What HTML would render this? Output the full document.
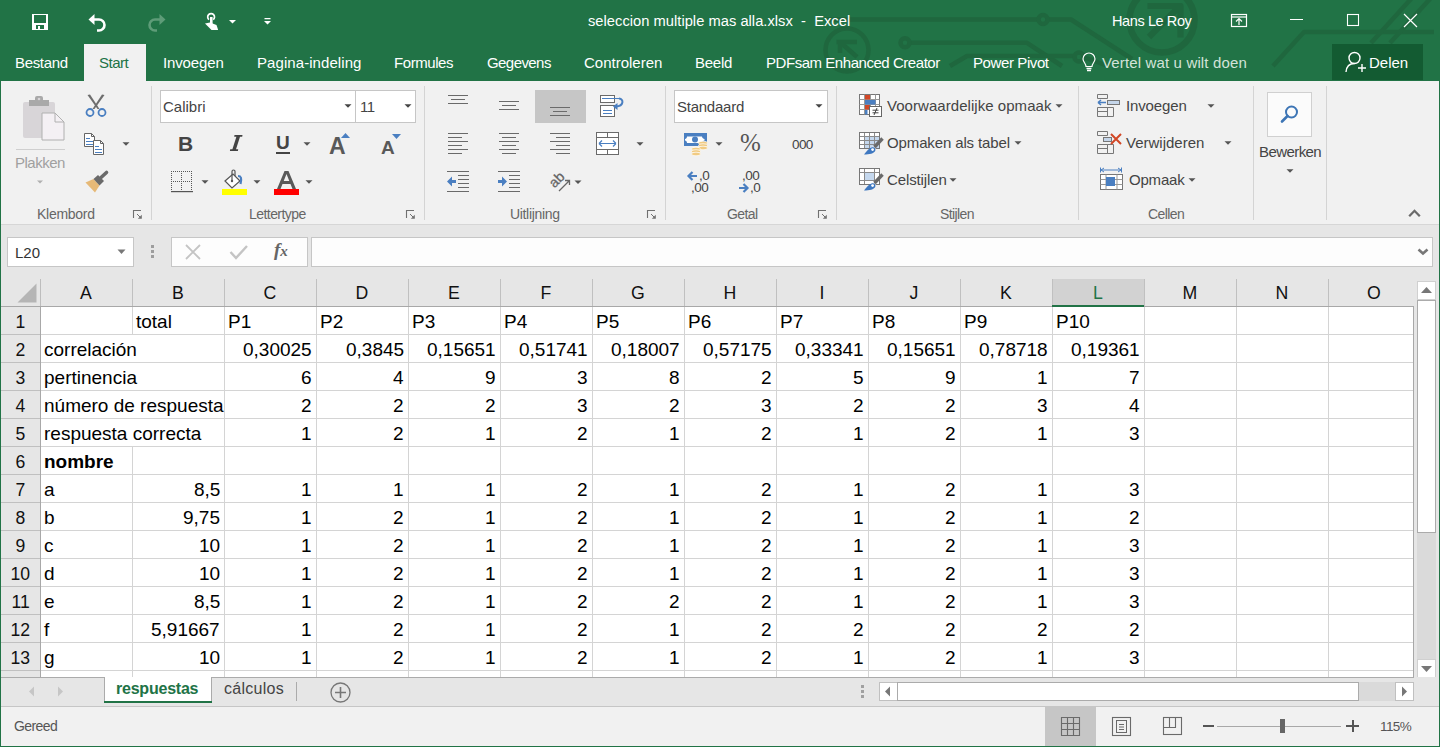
<!DOCTYPE html><html><head><meta charset="utf-8"><style>
html,body{margin:0;padding:0;width:1440px;height:747px;overflow:hidden;background:#fff;position:relative}
.a{position:absolute}
.t{position:absolute;white-space:pre;line-height:1;font-family:"Liberation Sans",sans-serif}
svg{overflow:visible}
</style></head><body>
<div class="a" style="left:0px;top:0px;width:1440px;height:81px;background:#217346;"></div>
<svg class="a" style="left:0px;top:0px" width="1440" height="81" viewBox="0 0 1440 81"><g stroke="#1f673e" stroke-width="4.5" fill="none" stroke-linejoin="round">
<path d="M825 19.5H1038.5M1047.5 19.5H1071L1132 59"/>
<circle cx="1043" cy="19.5" r="4.5"/>
<path d="M909.5 42.8H1027L1062 66"/>
<circle cx="905" cy="42.8" r="4.5"/>
<path d="M950 66L967 56H1074.5M1083.5 57L1108 66"/>
<circle cx="1079" cy="57" r="4.5"/>
<circle cx="847" cy="50" r="21.5"/>
<path d="M857 57L840 42M836.5 42H857M840 39.8V53"/>
<circle cx="1162" cy="20" r="32.5" stroke-width="6.5"/>
<path d="M1147.5 6H1180.5V37.5M1149 37L1177 9" stroke-width="6.2"/>
<path d="M1273 66L1304 32H1434"/>
<path d="M1371 43L1414.5 -5M1390 43L1433.5 -5"/>
</g></svg>
<svg class="a" style="left:32px;top:14px" width="16" height="16" viewBox="0 0 16 16"><path d="M0 0H16V16H0Z M2 1V9H14V1Z M4 11V15H12V11Z M6 12H8V15H6Z" fill="#ffffff" fill-rule="evenodd"/></svg>
<svg class="a" style="left:88px;top:13px" width="20" height="18" viewBox="0 0 20 18"><path d="M2 6.5H11A5.5 5.5 0 0 1 11 17.5H9" stroke="#fff" stroke-width="2.6" fill="none"/><path d="M0.5 6.5L6.5 1V12Z" fill="#fff"/></svg>
<svg class="a" style="left:146px;top:13px" width="20" height="18" viewBox="0 0 20 18"><path d="M18 6.5H9A5.5 5.5 0 0 0 9 17.5H11" stroke="#5e9c78" stroke-width="2.6" fill="none"/><path d="M19.5 6.5L13.5 1V12Z" fill="#5e9c78"/></svg>
<svg class="a" style="left:203px;top:12px" width="18" height="19" viewBox="0 0 18 19"><path d="M6 7.6A3.4 3.4 0 1 1 10.2 7.6" stroke="#fff" stroke-width="1.7" fill="none"/><rect x="7" y="5" width="2.6" height="8" fill="#fff"/><path d="M2 11.6L7 10.5L13.5 13L15 17.5V18H8.5Z" fill="#fff"/></svg>
<svg class="a" style="left:229px;top:20px" width="7" height="4" viewBox="0 0 7 4"><path d="M0 0H7L3.5 3.5Z" fill="#fff"/></svg>
<svg class="a" style="left:264px;top:18px" width="7" height="8" viewBox="0 0 7 8"><path d="M0.5 0H6.5V1.3H0.5Z M0 3H7L3.5 6.5Z" fill="#fff"/></svg>
<div class="t" style="left:588.00px;top:13.55px;font-size:14.7px;color:#fff;letter-spacing:0.024px;">seleccion multiple mas alla.xlsx  -  Excel</div>
<div class="t" style="left:1112.00px;top:13.72px;font-size:14.5px;color:#fff;letter-spacing:-0.400px;">Hans Le Roy</div>
<svg class="a" style="left:1230px;top:13px" width="18" height="15" viewBox="0 0 18 15"><rect x="1.5" y="1.5" width="15" height="12" stroke="#fff" stroke-width="1.2" fill="none"/><path d="M1.5 4H16.5" stroke="#fff" stroke-width="1.2"/><path d="M9 12V6M6 8.5L9 5.5L12 8.5" stroke="#fff" stroke-width="1.2" fill="none"/></svg>
<div class="a" style="left:1290px;top:19px;width:13px;height:1px;background:#fff;"></div>
<svg class="a" style="left:1346px;top:13px" width="14" height="14" viewBox="0 0 14 14"><rect x="1.5" y="1.5" width="11" height="11" stroke="#fff" stroke-width="1.1" fill="none"/></svg>
<svg class="a" style="left:1403px;top:13px" width="15" height="15" viewBox="0 0 15 15"><path d="M1 1L14 14M14 1L1 14" stroke="#fff" stroke-width="1.2"/></svg>
<div class="a" style="left:84px;top:44px;width:62px;height:37px;background:#f1f1f1;"></div>
<div class="t" style="left:15.00px;top:55.30px;font-size:15px;color:#fff;letter-spacing:-0.333px;">Bestand</div>
<div class="t" style="left:99.00px;top:55.30px;font-size:15px;color:#217346;letter-spacing:-0.500px;">Start</div>
<div class="t" style="left:163.00px;top:55.30px;font-size:15px;color:#fff;letter-spacing:-0.143px;">Invoegen</div>
<div class="t" style="left:257.00px;top:55.30px;font-size:15px;color:#fff;letter-spacing:0.071px;">Pagina-indeling</div>
<div class="t" style="left:394.00px;top:55.30px;font-size:15px;color:#fff;letter-spacing:-0.429px;">Formules</div>
<div class="t" style="left:487.00px;top:55.30px;font-size:15px;color:#fff;letter-spacing:-0.571px;">Gegevens</div>
<div class="t" style="left:584.00px;top:55.30px;font-size:15px;color:#fff;">Controleren</div>
<div class="t" style="left:695.00px;top:55.30px;font-size:15px;color:#fff;letter-spacing:-0.250px;">Beeld</div>
<div class="t" style="left:766.00px;top:55.30px;font-size:15px;color:#fff;letter-spacing:-0.455px;">PDFsam Enhanced Creator</div>
<div class="t" style="left:973.00px;top:55.30px;font-size:15px;color:#fff;letter-spacing:-0.400px;">Power Pivot</div>
<svg class="a" style="left:1082px;top:53px" width="14" height="19" viewBox="0 0 14 19"><path d="M4 13.5C4 10.5 1 9 1 6A6 6 0 0 1 13 6C13 9 10 10.5 10 13.5Z" stroke="#fff" stroke-width="1.2" fill="none"/><path d="M4.5 15.5H9.5M5 17.5H9" stroke="#fff" stroke-width="1.3"/></svg>
<div class="t" style="left:1102.00px;top:55.30px;font-size:15px;color:#d3e3d9;letter-spacing:0.143px;">Vertel wat u wilt doen</div>
<div class="a" style="left:1332px;top:44px;width:91px;height:36px;background:#135b32;"></div>
<svg class="a" style="left:1345px;top:51px" width="22" height="23" viewBox="0 0 22 23"><circle cx="9.5" cy="7" r="5.5" stroke="#fff" stroke-width="1.4" fill="none"/><path d="M1 21C1.5 15 5 12.5 9.5 12.5" stroke="#fff" stroke-width="1.4" fill="none"/><path d="M13 17H21M17 13V21" stroke="#fff" stroke-width="1.4"/></svg>
<div class="t" style="left:1369.00px;top:55.30px;font-size:15px;color:#fff;">Delen</div>
<div class="a" style="left:1px;top:81px;width:1438px;height:143px;background:#f1f1f1;"></div>
<div class="a" style="left:0px;top:224px;width:1440px;height:1px;background:#d6d6d6;"></div>
<div class="a" style="left:0px;top:225px;width:1440px;height:54px;background:#e6e6e6;"></div>
<div class="a" style="left:0px;top:81px;width:1px;height:666px;background:#217346;"></div>
<div class="a" style="left:1439px;top:81px;width:1px;height:666px;background:#217346;"></div>
<div class="a" style="left:0px;top:746px;width:1440px;height:1px;background:#217346;"></div>
<div class="a" style="left:151px;top:86px;width:1px;height:134px;background:#d4d4d4;"></div>
<div class="a" style="left:424px;top:86px;width:1px;height:134px;background:#d4d4d4;"></div>
<div class="a" style="left:665px;top:86px;width:1px;height:134px;background:#d4d4d4;"></div>
<div class="a" style="left:836px;top:86px;width:1px;height:134px;background:#d4d4d4;"></div>
<div class="a" style="left:1078px;top:86px;width:1px;height:134px;background:#d4d4d4;"></div>
<div class="a" style="left:1253px;top:86px;width:1px;height:134px;background:#d4d4d4;"></div>
<div class="a" style="left:1326px;top:86px;width:1px;height:134px;background:#d4d4d4;"></div>
<div class="t" style="left:37.00px;top:207.15px;font-size:14px;color:#666;letter-spacing:-0.286px;">Klembord</div>
<div class="t" style="left:249.00px;top:207.15px;font-size:14px;color:#666;letter-spacing:-0.556px;">Lettertype</div>
<div class="t" style="left:510.00px;top:207.15px;font-size:14px;color:#666;letter-spacing:-0.333px;">Uitlijning</div>
<div class="t" style="left:727.00px;top:207.15px;font-size:14px;color:#666;letter-spacing:-0.600px;">Getal</div>
<div class="t" style="left:940.00px;top:207.15px;font-size:14px;color:#666;letter-spacing:-0.600px;">Stijlen</div>
<div class="t" style="left:1148.00px;top:207.15px;font-size:14px;color:#666;letter-spacing:-0.600px;">Cellen</div>
<svg class="a" style="left:133px;top:210px" width="10" height="10" viewBox="0 0 10 10"><path d="M0.5 8V0.5H8" stroke="#707070" stroke-width="1.1" fill="none"/><path d="M4 4L7 7" stroke="#707070" stroke-width="1"/><path d="M4.8 8.8H8.8V4.8Z" fill="#707070"/></svg>
<svg class="a" style="left:406px;top:210px" width="10" height="10" viewBox="0 0 10 10"><path d="M0.5 8V0.5H8" stroke="#707070" stroke-width="1.1" fill="none"/><path d="M4 4L7 7" stroke="#707070" stroke-width="1"/><path d="M4.8 8.8H8.8V4.8Z" fill="#707070"/></svg>
<svg class="a" style="left:647px;top:210px" width="10" height="10" viewBox="0 0 10 10"><path d="M0.5 8V0.5H8" stroke="#707070" stroke-width="1.1" fill="none"/><path d="M4 4L7 7" stroke="#707070" stroke-width="1"/><path d="M4.8 8.8H8.8V4.8Z" fill="#707070"/></svg>
<svg class="a" style="left:818px;top:210px" width="10" height="10" viewBox="0 0 10 10"><path d="M0.5 8V0.5H8" stroke="#707070" stroke-width="1.1" fill="none"/><path d="M4 4L7 7" stroke="#707070" stroke-width="1"/><path d="M4.8 8.8H8.8V4.8Z" fill="#707070"/></svg>
<svg class="a" style="left:22px;top:96px" width="44" height="46" viewBox="0 0 44 46"><rect x="1" y="6" width="32" height="36" rx="2" fill="#d8d5d8"/>
<rect x="7" y="4" width="20" height="6" fill="#a9a9a9"/><rect x="13" y="0" width="8" height="6" rx="2" fill="#a9a9a9"/><circle cx="17" cy="3" r="1.3" fill="#d8d5d8"/>
<path d="M20 17H33L42 26V44H20Z" fill="#f4f0f4" stroke="#b0b0b0" stroke-width="1"/><path d="M33 17V26H42" fill="none" stroke="#b0b0b0" stroke-width="1"/></svg>
<div class="a" style="left:16px;top:149px;width:49px;height:1px;background:#cfcfcf;"></div>
<div class="t" style="left:15.00px;top:155.30px;font-size:15px;color:#a0a0a0;letter-spacing:-0.500px;">Plakken</div>
<svg class="a" style="left:35px;top:179px" width="10" height="6" viewBox="0 0 10 6"><path d="M2 1.5L8 1.5L5 4.5Z" fill="#b0b0b0"/></svg>
<svg class="a" style="left:85px;top:94px" width="22" height="24" viewBox="0 0 22 24"><path d="M2.5 1L5 0.5L14.5 15H12.5Z" fill="#6d6d6d"/><path d="M19.5 1L17 0.5L7.5 15H9.5Z" fill="#6d6d6d"/><circle cx="5" cy="18.5" r="3.5" stroke="#4a7fc1" stroke-width="1.8" fill="none"/><circle cx="17" cy="18.5" r="3.5" stroke="#4a7fc1" stroke-width="1.8" fill="none"/></svg>
<svg class="a" style="left:84px;top:133px" width="22" height="23" viewBox="0 0 22 23"><path d="M0.5 0.5H7.5L10.5 3.5V13.5H0.5Z" fill="#fff" stroke="#666"/><path d="M7.5 0.5V3.5H10.5" fill="none" stroke="#666"/><path d="M2 5.5H6M2 8.5H9M2 11.5H9" stroke="#4a7fc1"/><path d="M9.5 7.5H16.5L19.5 10.5V21.5H9.5Z" fill="#fff" stroke="#666"/><path d="M16.5 7.5V10.5H19.5" fill="none" stroke="#666"/><path d="M11 13.5H15M11 16.5H18M11 19.5H18" stroke="#4a7fc1"/></svg>
<svg class="a" style="left:121px;top:141px" width="10" height="6" viewBox="0 0 10 6"><path d="M1.5 1.25L8.5 1.25L5 4.75Z" fill="#555"/></svg>
<svg class="a" style="left:84px;top:171px" width="26" height="23" viewBox="0 0 26 23"><path d="M1.5 11.5L9.5 8L15.5 14.5L11 21.5Z" fill="#e6b977"/><path d="M9.5 8L14 4L20 10L15.5 14.5Z" fill="#6a6a6a"/><path d="M17 6.5L22.5 1.5" stroke="#6a6a6a" stroke-width="3.6" stroke-linecap="round"/></svg>
<div class="a" style="left:160px;top:90px;width:196px;height:33px;background:#fff;box-sizing:border-box;border:1px solid #c6c6c6;"></div>
<div class="a" style="left:355px;top:90px;width:61px;height:33px;background:#fff;box-sizing:border-box;border:1px solid #c6c6c6;"></div>
<div class="t" style="left:163.00px;top:99.30px;font-size:15px;color:#444;">Calibri</div>
<svg class="a" style="left:343px;top:103px" width="10" height="6" viewBox="0 0 10 6"><path d="M1.5 1.25L8.5 1.25L5 4.75Z" fill="#444"/></svg>
<div class="t" style="left:360.00px;top:99.30px;font-size:15px;color:#444;letter-spacing:-0.600px;">11</div>
<svg class="a" style="left:403px;top:103px" width="10" height="6" viewBox="0 0 10 6"><path d="M1.5 1.25L8.5 1.25L5 4.75Z" fill="#444"/></svg>
<div class="t" style="left:178.00px;top:133.22px;font-size:21px;color:#444;font-weight:bold;">B</div>
<svg class="a" style="left:228px;top:134px" width="15" height="18" viewBox="0 0 15 18"><path d="M6.5 1H14.5L14.2 2.8H12L8 15.2H10.2L9.9 17H1.9L2.2 15.2H4.4L8.4 2.8H6.2Z" fill="#444"/></svg>
<div class="t" style="left:276.00px;top:132.91px;font-size:19px;color:#444;font-weight:bold;">U</div>
<div class="a" style="left:276px;top:152px;width:14px;height:1.5px;background:#444;"></div>
<svg class="a" style="left:302px;top:141px" width="10" height="6" viewBox="0 0 10 6"><path d="M1.5 1.25L8.5 1.25L5 4.75Z" fill="#555"/></svg>
<div class="t" style="left:329.00px;top:134.53px;font-size:23px;color:#595959;font-weight:bold;">A</div>
<svg class="a" style="left:341px;top:133px" width="9" height="5" viewBox="0 0 9 5"><path d="M0 5H9L4.5 0Z" fill="#4a7fc1"/></svg>
<div class="t" style="left:381.00px;top:137.91px;font-size:19px;color:#595959;font-weight:bold;">A</div>
<svg class="a" style="left:392px;top:134px" width="9" height="5" viewBox="0 0 9 5"><path d="M0 0H9L4.5 5Z" fill="#4a7fc1"/></svg>
<svg class="a" style="left:170px;top:170px" width="24" height="24" viewBox="0 0 24 24"><g fill="#555"><rect x="1" y="1" width="1" height="1"/><rect x="1" y="11" width="1" height="1"/><rect x="1" y="21" width="1" height="1"/><rect x="1" y="1" width="1" height="1"/><rect x="11" y="1" width="1" height="1"/><rect x="21" y="1" width="1" height="1"/><rect x="3" y="1" width="1" height="1"/><rect x="3" y="11" width="1" height="1"/><rect x="3" y="21" width="1" height="1"/><rect x="1" y="3" width="1" height="1"/><rect x="11" y="3" width="1" height="1"/><rect x="21" y="3" width="1" height="1"/><rect x="5" y="1" width="1" height="1"/><rect x="5" y="11" width="1" height="1"/><rect x="5" y="21" width="1" height="1"/><rect x="1" y="5" width="1" height="1"/><rect x="11" y="5" width="1" height="1"/><rect x="21" y="5" width="1" height="1"/><rect x="7" y="1" width="1" height="1"/><rect x="7" y="11" width="1" height="1"/><rect x="7" y="21" width="1" height="1"/><rect x="1" y="7" width="1" height="1"/><rect x="11" y="7" width="1" height="1"/><rect x="21" y="7" width="1" height="1"/><rect x="9" y="1" width="1" height="1"/><rect x="9" y="11" width="1" height="1"/><rect x="9" y="21" width="1" height="1"/><rect x="1" y="9" width="1" height="1"/><rect x="11" y="9" width="1" height="1"/><rect x="21" y="9" width="1" height="1"/><rect x="11" y="1" width="1" height="1"/><rect x="11" y="11" width="1" height="1"/><rect x="11" y="21" width="1" height="1"/><rect x="1" y="11" width="1" height="1"/><rect x="11" y="11" width="1" height="1"/><rect x="21" y="11" width="1" height="1"/><rect x="13" y="1" width="1" height="1"/><rect x="13" y="11" width="1" height="1"/><rect x="13" y="21" width="1" height="1"/><rect x="1" y="13" width="1" height="1"/><rect x="11" y="13" width="1" height="1"/><rect x="21" y="13" width="1" height="1"/><rect x="15" y="1" width="1" height="1"/><rect x="15" y="11" width="1" height="1"/><rect x="15" y="21" width="1" height="1"/><rect x="1" y="15" width="1" height="1"/><rect x="11" y="15" width="1" height="1"/><rect x="21" y="15" width="1" height="1"/><rect x="17" y="1" width="1" height="1"/><rect x="17" y="11" width="1" height="1"/><rect x="17" y="21" width="1" height="1"/><rect x="1" y="17" width="1" height="1"/><rect x="11" y="17" width="1" height="1"/><rect x="21" y="17" width="1" height="1"/><rect x="19" y="1" width="1" height="1"/><rect x="19" y="11" width="1" height="1"/><rect x="19" y="21" width="1" height="1"/><rect x="1" y="19" width="1" height="1"/><rect x="11" y="19" width="1" height="1"/><rect x="21" y="19" width="1" height="1"/><rect x="21" y="1" width="1" height="1"/><rect x="21" y="11" width="1" height="1"/><rect x="21" y="21" width="1" height="1"/><rect x="1" y="21" width="1" height="1"/><rect x="11" y="21" width="1" height="1"/><rect x="21" y="21" width="1" height="1"/></g><rect x="1" y="21" width="22" height="1.2" fill="#555"/></svg>
<svg class="a" style="left:200px;top:179px" width="10" height="6" viewBox="0 0 10 6"><path d="M1.5 1.25L8.5 1.25L5 4.75Z" fill="#555"/></svg>
<svg class="a" style="left:221px;top:169px" width="28" height="28" viewBox="0 0 28 28"><path d="M4 12L12 5L19 12L11 19Z" fill="#fff" stroke="#555" stroke-width="1.2"/><path d="M11 12V2.5A1.5 1.5 0 0 1 14 2.5V7" stroke="#555" stroke-width="1.2" fill="none"/><circle cx="11" cy="12" r="1.2" fill="#555"/><path d="M17 7C20 7 21 9 19.5 15" stroke="#4a7fc1" stroke-width="2.2" fill="none"/><rect x="1" y="20" width="25" height="6" fill="#ffff00"/></svg>
<svg class="a" style="left:252px;top:179px" width="10" height="6" viewBox="0 0 10 6"><path d="M1.5 1.25L8.5 1.25L5 4.75Z" fill="#555"/></svg>
<svg class="a" style="left:273px;top:169px" width="28" height="28" viewBox="0 0 28 28"><path d="M4 20L11.5 2H15.5L23 20H19.5L17.5 15H9.5L7.5 20ZM10.7 12H16.3L13.5 5Z" fill="#595959"/><rect x="1" y="20" width="25" height="6" fill="#ff0000"/></svg>
<svg class="a" style="left:304px;top:179px" width="10" height="6" viewBox="0 0 10 6"><path d="M1.5 1.25L8.5 1.25L5 4.75Z" fill="#555"/></svg>
<div class="a" style="left:448px;top:95px;width:20px;height:1px;background:#6a6a6a;"></div>
<div class="a" style="left:451px;top:99px;width:14px;height:1px;background:#6a6a6a;"></div>
<div class="a" style="left:448px;top:103px;width:20px;height:1px;background:#6a6a6a;"></div>
<div class="a" style="left:499px;top:101px;width:20px;height:1px;background:#6a6a6a;"></div>
<div class="a" style="left:502px;top:105px;width:14px;height:1px;background:#6a6a6a;"></div>
<div class="a" style="left:499px;top:109px;width:20px;height:1px;background:#6a6a6a;"></div>
<div class="a" style="left:535px;top:90px;width:51px;height:33px;background:#c6c6c6;"></div>
<div class="a" style="left:550px;top:107px;width:20px;height:1px;background:#6a6a6a;"></div>
<div class="a" style="left:553px;top:111px;width:14px;height:1px;background:#6a6a6a;"></div>
<div class="a" style="left:550px;top:115px;width:20px;height:1px;background:#6a6a6a;"></div>
<div class="a" style="left:448px;top:133px;width:20px;height:1px;background:#6a6a6a;"></div>
<div class="a" style="left:499px;top:133px;width:20px;height:1px;background:#6a6a6a;"></div>
<div class="a" style="left:550px;top:133px;width:20px;height:1px;background:#6a6a6a;"></div>
<div class="a" style="left:448px;top:137px;width:14px;height:1px;background:#6a6a6a;"></div>
<div class="a" style="left:502px;top:137px;width:14px;height:1px;background:#6a6a6a;"></div>
<div class="a" style="left:556px;top:137px;width:14px;height:1px;background:#6a6a6a;"></div>
<div class="a" style="left:448px;top:141px;width:20px;height:1px;background:#6a6a6a;"></div>
<div class="a" style="left:499px;top:141px;width:20px;height:1px;background:#6a6a6a;"></div>
<div class="a" style="left:550px;top:141px;width:20px;height:1px;background:#6a6a6a;"></div>
<div class="a" style="left:448px;top:145px;width:14px;height:1px;background:#6a6a6a;"></div>
<div class="a" style="left:502px;top:145px;width:14px;height:1px;background:#6a6a6a;"></div>
<div class="a" style="left:556px;top:145px;width:14px;height:1px;background:#6a6a6a;"></div>
<div class="a" style="left:448px;top:149px;width:20px;height:1px;background:#6a6a6a;"></div>
<div class="a" style="left:499px;top:149px;width:20px;height:1px;background:#6a6a6a;"></div>
<div class="a" style="left:550px;top:149px;width:20px;height:1px;background:#6a6a6a;"></div>
<div class="a" style="left:448px;top:153px;width:14px;height:1px;background:#6a6a6a;"></div>
<div class="a" style="left:502px;top:153px;width:14px;height:1px;background:#6a6a6a;"></div>
<div class="a" style="left:556px;top:153px;width:14px;height:1px;background:#6a6a6a;"></div>
<svg class="a" style="left:599px;top:94px" width="26" height="24" viewBox="0 0 26 24"><rect x="1.5" y="1.5" width="14" height="7" fill="#fff" stroke="#6a6a6a"/><rect x="1.5" y="11.5" width="14" height="11" fill="#fff" stroke="#6a6a6a"/><path d="M3 4.5H21M4 16.5H13M4 19.5H13" stroke="#4a7fc1"/><path d="M20 4.5C25 5 25 12 17 12.5" stroke="#4a7fc1" stroke-width="2" fill="none"/><path d="M14 12.5L18.5 9V16Z" fill="#4a7fc1"/></svg>
<svg class="a" style="left:596px;top:132px" width="24" height="24" viewBox="0 0 24 24"><rect x="0.5" y="0.5" width="22" height="22" fill="#fff" stroke="#6a6a6a"/><path d="M0.5 5.5H22.5M0.5 17.5H22.5M11.5 0.5V5.5M11.5 17.5V22.5" stroke="#6a6a6a"/><path d="M3 11.5H20M3 11.5L6 8.5M3 11.5L6 14.5M20 11.5L17 8.5M20 11.5L17 14.5" stroke="#4a7fc1" stroke-width="1.2" fill="none"/></svg>
<svg class="a" style="left:635px;top:141px" width="10" height="6" viewBox="0 0 10 6"><path d="M1.5 1.25L8.5 1.25L5 4.75Z" fill="#555"/></svg>
<div class="a" style="left:447px;top:171px;width:22px;height:1px;background:#6a6a6a;"></div>
<div class="a" style="left:447px;top:191px;width:22px;height:1px;background:#6a6a6a;"></div>
<div class="a" style="left:458px;top:175px;width:11px;height:1px;background:#6a6a6a;"></div>
<div class="a" style="left:458px;top:179px;width:11px;height:1px;background:#6a6a6a;"></div>
<div class="a" style="left:458px;top:183px;width:11px;height:1px;background:#6a6a6a;"></div>
<div class="a" style="left:458px;top:187px;width:11px;height:1px;background:#6a6a6a;"></div>
<svg class="a" style="left:447px;top:176px" width="9" height="11" viewBox="0 0 9 11"><path d="M9 4H5V0.5L0 5.5L5 10.5V7H9Z" fill="#4a7fc1"/></svg>
<div class="a" style="left:498px;top:171px;width:22px;height:1px;background:#6a6a6a;"></div>
<div class="a" style="left:498px;top:191px;width:22px;height:1px;background:#6a6a6a;"></div>
<div class="a" style="left:509px;top:175px;width:11px;height:1px;background:#6a6a6a;"></div>
<div class="a" style="left:509px;top:179px;width:11px;height:1px;background:#6a6a6a;"></div>
<div class="a" style="left:509px;top:183px;width:11px;height:1px;background:#6a6a6a;"></div>
<div class="a" style="left:509px;top:187px;width:11px;height:1px;background:#6a6a6a;"></div>
<svg class="a" style="left:498px;top:176px" width="9" height="11" viewBox="0 0 9 11"><path d="M0 4H4V0.5L9 5.5L4 10.5V7H0Z" fill="#4a7fc1"/></svg>
<svg class="a" style="left:544px;top:166px" width="30" height="30" viewBox="0 0 30 30"><text x="0" y="0" font-family="Liberation Sans" font-size="14" fill="#666" stroke="#666" stroke-width="0.3" transform="translate(10.5 22.5) rotate(-45)">ab</text><path d="M15 25L25 15M21 14.5H25.5V19" stroke="#666" stroke-width="1.3" fill="none"/></svg>
<svg class="a" style="left:574px;top:180px" width="8" height="5" viewBox="0 0 8 5"><path d="M0.5 0.5H7.5L4 4Z" fill="#555"/></svg>
<div class="a" style="left:674px;top:90px;width:154px;height:33px;background:#fff;box-sizing:border-box;border:1px solid #c6c6c6;"></div>
<div class="t" style="left:677.00px;top:99.30px;font-size:15px;color:#444;letter-spacing:-0.250px;">Standaard</div>
<svg class="a" style="left:814px;top:103px" width="10" height="6" viewBox="0 0 10 6"><path d="M1.5 1.25L8.5 1.25L5 4.75Z" fill="#444"/></svg>
<svg class="a" style="left:683px;top:132px" width="26" height="25" viewBox="0 0 26 25"><rect x="1" y="1" width="23" height="13" fill="#4a7fc1"/><path d="M4 4.5H19C19 6 20.5 7 21.5 7V8.5C20.5 8.5 19 9.5 19 11H4C4 9.5 3 8.5 2 8.5V7C3 7 4 6 4 4.5Z" fill="#fff"/><circle cx="12" cy="7.5" r="3" fill="#4a7fc1"/><g fill="#f1cb83" stroke="#fff" stroke-width="0.7"><ellipse cx="20" cy="11" rx="4.5" ry="1.8"/><ellipse cx="20" cy="13.5" rx="4.5" ry="1.8"/><ellipse cx="20" cy="16" rx="4.5" ry="1.8"/><ellipse cx="13" cy="17" rx="4.5" ry="1.8"/><ellipse cx="13" cy="19.5" rx="4.5" ry="1.8"/><ellipse cx="13" cy="22" rx="4.5" ry="1.8"/></g></svg>
<svg class="a" style="left:714px;top:141px" width="10" height="6" viewBox="0 0 10 6"><path d="M1.5 1.25L8.5 1.25L5 4.75Z" fill="#555"/></svg>
<div class="t" style="left:740px;top:130px;font-size:25px;color:#555;font-family:'Liberation Serif',serif">%</div>
<div class="t" style="left:792.00px;top:137.57px;font-size:13.5px;color:#444;letter-spacing:-0.600px;">000</div>
<svg class="a" style="left:687px;top:171px" width="11" height="10" viewBox="0 0 11 10"><path d="M10 5H3M5.5 1L1.5 5L5.5 9" stroke="#4a7fc1" stroke-width="2.2" fill="none"/></svg>
<div class="t" style="left:699.00px;top:168.57px;font-size:13.5px;color:#444;letter-spacing:-0.600px;">,0</div>
<div class="t" style="left:691.00px;top:180.57px;font-size:13.5px;color:#444;letter-spacing:-0.500px;">,00</div>
<div class="t" style="left:742.00px;top:168.57px;font-size:13.5px;color:#444;letter-spacing:-0.500px;">,00</div>
<svg class="a" style="left:738px;top:183px" width="11" height="10" viewBox="0 0 11 10"><path d="M1 5H8M5.5 1L9.5 5L5.5 9" stroke="#4a7fc1" stroke-width="2.2" fill="none"/></svg>
<div class="t" style="left:750.00px;top:180.57px;font-size:13.5px;color:#444;letter-spacing:-0.600px;">,0</div>
<svg class="a" style="left:858px;top:93px" width="26" height="26" viewBox="0 0 26 26"><rect x="1.5" y="1.5" width="20" height="20" fill="#fff" stroke="#777"/><path d="M6.5 1.5V21.5M12.5 1.5V21.5M17.5 1.5V21.5M1.5 6.5H21.5M1.5 11.5H21.5M1.5 16.5H21.5" stroke="#999"/><rect x="7" y="2" width="5" height="4.5" fill="#d24726"/><rect x="7" y="7" width="10.5" height="4.5" fill="#4a7fc1"/><rect x="7" y="12" width="5" height="4.5" fill="#d24726"/><rect x="7" y="17" width="2.5" height="4.5" fill="#4a7fc1"/><rect x="11.5" y="13.5" width="12" height="10" fill="#fff" stroke="#666"/><path d="M14.5 17.2H20.5M14.5 19.8H20.5M19 15L16 22" stroke="#333" stroke-width="0.9"/></svg>
<div class="t" style="left:887.00px;top:98.30px;font-size:15px;color:#444;letter-spacing:0.048px;">Voorwaardelijke opmaak</div>
<svg class="a" style="left:1054px;top:103px" width="10" height="6" viewBox="0 0 10 6"><path d="M1.5 1.25L8.5 1.25L5 4.75Z" fill="#555"/></svg>
<svg class="a" style="left:858px;top:131px" width="26" height="25" viewBox="0 0 26 25"><rect x="1.5" y="1.5" width="20" height="16" fill="#fff" stroke="#777"/><rect x="6.5" y="5.5" width="15" height="12" fill="#c5d8ee"/><path d="M6.5 1.5V17.5M11.5 1.5V17.5M16.5 1.5V17.5M1.5 5.5H21.5M1.5 9.5H21.5M1.5 13.5H21.5" stroke="#8a8a8a"/><rect x="1.5" y="1.5" width="20" height="16" fill="none" stroke="#777"/><path d="M16.5 16L24.5 7.5" stroke="#6a6a6a" stroke-width="3.4"/><path d="M15 15.5L18 18.5" stroke="#f1f1f1" stroke-width="1"/><path d="M6 23.5C8.5 20.5 10.5 17.5 13.5 16.5C16 15.8 18.2 17.6 17.2 20C16 22.5 11.5 23.5 6 23.5Z" fill="#3f78c0"/><circle cx="14.6" cy="18.6" r="1.4" fill="#fff"/></svg>
<div class="t" style="left:887.00px;top:135.30px;font-size:15px;color:#444;letter-spacing:-0.125px;">Opmaken als tabel</div>
<svg class="a" style="left:1013px;top:140px" width="10" height="6" viewBox="0 0 10 6"><path d="M1.5 1.25L8.5 1.25L5 4.75Z" fill="#555"/></svg>
<svg class="a" style="left:858px;top:167px" width="26" height="25" viewBox="0 0 26 25"><rect x="1.5" y="1.5" width="20" height="16" fill="#fff" stroke="#777"/><rect x="6.5" y="5.5" width="10" height="8" fill="#c5d8ee"/><path d="M6.5 1.5V17.5M16.5 1.5V17.5M1.5 5.5H21.5M1.5 13.5H21.5" stroke="#8a8a8a"/><rect x="1.5" y="1.5" width="20" height="16" fill="none" stroke="#777"/><path d="M16.5 16L24.5 7.5" stroke="#6a6a6a" stroke-width="3.4"/><path d="M15 15.5L18 18.5" stroke="#f1f1f1" stroke-width="1"/><path d="M6 23.5C8.5 20.5 10.5 17.5 13.5 16.5C16 15.8 18.2 17.6 17.2 20C16 22.5 11.5 23.5 6 23.5Z" fill="#3f78c0"/><circle cx="14.6" cy="18.6" r="1.4" fill="#fff"/></svg>
<div class="t" style="left:887.00px;top:172.30px;font-size:15px;color:#444;letter-spacing:-0.111px;">Celstijlen</div>
<svg class="a" style="left:948px;top:177px" width="10" height="6" viewBox="0 0 10 6"><path d="M1.5 1.25L8.5 1.25L5 4.75Z" fill="#555"/></svg>
<svg class="a" style="left:1097px;top:94px" width="24" height="23" viewBox="0 0 24 23"><path d="M0.5 0.5H10.5V4.5H0.5ZM0.5 13.5H10.5V17.5H0.5ZM0.5 17.5H10.5V22.5H0.5ZM10.5 13.5H16.5V22.5H10.5Z" fill="none" stroke="#777"/><rect x="10.5" y="6.5" width="12" height="4" fill="#c5d6ea" stroke="#777"/><path d="M1 8.5H9M1 8.5L4 6M1 8.5L4 11" stroke="#4a7fc1" stroke-width="1.5" fill="none"/></svg>
<div class="t" style="left:1126.00px;top:98.30px;font-size:15px;color:#444;letter-spacing:-0.143px;">Invoegen</div>
<svg class="a" style="left:1206px;top:103px" width="10" height="6" viewBox="0 0 10 6"><path d="M1.5 1.25L8.5 1.25L5 4.75Z" fill="#555"/></svg>
<svg class="a" style="left:1097px;top:131px" width="26" height="23" viewBox="0 0 26 23"><path d="M0.5 0.5H10.5V4.5H0.5ZM0.5 13.5H10.5V17.5H0.5ZM0.5 17.5H10.5V22.5H0.5ZM10.5 13.5H16.5V22.5H10.5Z" fill="none" stroke="#777"/><rect x="6.5" y="6.5" width="8" height="4" fill="#c5d6ea" stroke="#777"/><path d="M14 3L24 13M24 3L14 13" stroke="#d24726" stroke-width="2"/></svg>
<div class="t" style="left:1126.00px;top:135.30px;font-size:15px;color:#444;">Verwijderen</div>
<svg class="a" style="left:1223px;top:140px" width="10" height="6" viewBox="0 0 10 6"><path d="M1.5 1.25L8.5 1.25L5 4.75Z" fill="#555"/></svg>
<svg class="a" style="left:1100px;top:167px" width="25" height="25" viewBox="0 0 25 25"><path d="M1 3H21M1 3L4 1M1 3L4 5M21 3L18 1M21 3L18 5M0.5 0.5V5.5M21.5 0.5V5.5" stroke="#4a7fc1" stroke-width="1" fill="none"/><rect x="0.5" y="7.5" width="22" height="15" fill="#fff" stroke="#777"/><path d="M0.5 12.5H22.5M0.5 17.5H22.5M6 7.5V22.5M17 7.5V22.5" stroke="#999"/><rect x="6" y="10" width="9" height="9" fill="#4a7fc1"/></svg>
<div class="t" style="left:1129.00px;top:172.30px;font-size:15px;color:#444;letter-spacing:-0.200px;">Opmaak</div>
<svg class="a" style="left:1187px;top:177px" width="10" height="6" viewBox="0 0 10 6"><path d="M1.5 1.25L8.5 1.25L5 4.75Z" fill="#555"/></svg>
<div class="a" style="left:1267px;top:92px;width:45px;height:45px;background:#fbfbfb;box-sizing:border-box;border:1px solid #d0d0d0;"></div>
<svg class="a" style="left:1280px;top:104px" width="20" height="20" viewBox="0 0 20 20"><circle cx="11.5" cy="8" r="5.5" stroke="#3d75b5" stroke-width="2" fill="none"/><path d="M7.5 12L2 17.5" stroke="#3d75b5" stroke-width="2.6" stroke-linecap="round"/></svg>
<div class="t" style="left:1259.00px;top:144.30px;font-size:15px;color:#444;letter-spacing:-0.571px;">Bewerken</div>
<svg class="a" style="left:1285px;top:168px" width="10" height="6" viewBox="0 0 10 6"><path d="M1.5 1.25L8.5 1.25L5 4.75Z" fill="#555"/></svg>
<svg class="a" style="left:1408px;top:209px" width="13" height="9" viewBox="0 0 13 9"><path d="M1.2 7.2L6.5 1.8L11.8 7.2" stroke="#6a6a6a" stroke-width="2.3" fill="none"/></svg>
<div class="a" style="left:7px;top:237px;width:127px;height:30px;background:#fff;box-sizing:border-box;border:1px solid #c6c6c6;"></div>
<div class="t" style="left:15.00px;top:245.30px;font-size:15px;color:#333;">L20</div>
<svg class="a" style="left:117px;top:249px" width="10" height="6" viewBox="0 0 10 6"><path d="M0.5 0.5H8.5L4.5 5Z" fill="#777"/></svg>
<div class="a" style="left:151px;top:245px;width:3px;height:3px;background:#9d9d9d;"></div>
<div class="a" style="left:151px;top:250px;width:3px;height:3px;background:#9d9d9d;"></div>
<div class="a" style="left:151px;top:255px;width:3px;height:3px;background:#9d9d9d;"></div>
<div class="a" style="left:171px;top:237px;width:137px;height:30px;background:#fdfdfd;box-sizing:border-box;border:1px solid #c6c6c6;"></div>
<svg class="a" style="left:184px;top:243px" width="18" height="18" viewBox="0 0 18 18"><path d="M2 2L16 16M16 2L2 16" stroke="#c4c4c4" stroke-width="1.8"/></svg>
<svg class="a" style="left:229px;top:244px" width="20" height="16" viewBox="0 0 20 16"><path d="M1.5 8L7 14L18 2" stroke="#c4c4c4" stroke-width="2.4" fill="none"/></svg>
<div class="t" style="left:274px;top:240px;font-size:19px;color:#666;font-family:'Liberation Serif',serif;font-style:italic;font-weight:bold">f<span style="font-size:15px">x</span></div>
<div class="a" style="left:311px;top:237px;width:1122px;height:30px;background:#fdfdfd;box-sizing:border-box;border:1px solid #c6c6c6;"></div>
<svg class="a" style="left:1417px;top:248px" width="12" height="8" viewBox="0 0 12 8"><path d="M1.5 1.5L6 5.5L10.5 1.5" stroke="#777" stroke-width="2.6" fill="none"/></svg>
<div class="a" style="left:1px;top:279px;width:1413px;height:27px;background:#e6e6e6;"></div>
<div class="a" style="left:1px;top:307px;width:40px;height:370px;background:#e6e6e6;"></div>
<div class="a" style="left:41px;top:307px;width:1372px;height:370px;background:#fff;"></div>
<svg class="a" style="left:17px;top:283px" width="20" height="20" viewBox="0 0 20 20"><path d="M19.5 0.5V19.5H0.5Z" fill="#b5b5b5"/></svg>
<div class="a" style="left:1052px;top:279px;width:92px;height:27px;background:#d2d2d2;"></div>
<div class="a" style="left:132px;top:279px;width:1px;height:27px;background:#c0c0c0;"></div>
<div class="t" style="left:80.00px;top:285.01px;font-size:17.7px;color:#111;">A</div>
<div class="a" style="left:224px;top:279px;width:1px;height:27px;background:#c0c0c0;"></div>
<div class="t" style="left:172.00px;top:285.01px;font-size:17.7px;color:#111;">B</div>
<div class="a" style="left:316px;top:279px;width:1px;height:27px;background:#c0c0c0;"></div>
<div class="t" style="left:263.50px;top:285.01px;font-size:17.7px;color:#111;">C</div>
<div class="a" style="left:408px;top:279px;width:1px;height:27px;background:#c0c0c0;"></div>
<div class="t" style="left:355.50px;top:285.01px;font-size:17.7px;color:#111;">D</div>
<div class="a" style="left:500px;top:279px;width:1px;height:27px;background:#c0c0c0;"></div>
<div class="t" style="left:448.00px;top:285.01px;font-size:17.7px;color:#111;">E</div>
<div class="a" style="left:592px;top:279px;width:1px;height:27px;background:#c0c0c0;"></div>
<div class="t" style="left:540.50px;top:285.01px;font-size:17.7px;color:#111;">F</div>
<div class="a" style="left:684px;top:279px;width:1px;height:27px;background:#c0c0c0;"></div>
<div class="t" style="left:631.00px;top:285.01px;font-size:17.7px;color:#111;">G</div>
<div class="a" style="left:776px;top:279px;width:1px;height:27px;background:#c0c0c0;"></div>
<div class="t" style="left:723.50px;top:285.01px;font-size:17.7px;color:#111;">H</div>
<div class="a" style="left:868px;top:279px;width:1px;height:27px;background:#c0c0c0;"></div>
<div class="t" style="left:819.50px;top:285.01px;font-size:17.7px;color:#111;">I</div>
<div class="a" style="left:960px;top:279px;width:1px;height:27px;background:#c0c0c0;"></div>
<div class="t" style="left:909.50px;top:285.01px;font-size:17.7px;color:#111;">J</div>
<div class="a" style="left:1052px;top:279px;width:1px;height:27px;background:#c0c0c0;"></div>
<div class="t" style="left:1000.00px;top:285.01px;font-size:17.7px;color:#111;">K</div>
<div class="a" style="left:1144px;top:279px;width:1px;height:27px;background:#c0c0c0;"></div>
<div class="t" style="left:1093.00px;top:285.01px;font-size:17.7px;color:#217346;">L</div>
<div class="a" style="left:1236px;top:279px;width:1px;height:27px;background:#c0c0c0;"></div>
<div class="t" style="left:1182.50px;top:285.01px;font-size:17.7px;color:#111;">M</div>
<div class="a" style="left:1328px;top:279px;width:1px;height:27px;background:#c0c0c0;"></div>
<div class="t" style="left:1275.50px;top:285.01px;font-size:17.7px;color:#111;">N</div>
<div class="t" style="left:1367.00px;top:285.01px;font-size:17.7px;color:#111;">O</div>
<div class="a" style="left:40px;top:279px;width:1px;height:28px;background:#bdbdbd;"></div>
<div class="a" style="left:1px;top:306px;width:1413px;height:1px;background:#a8a8a8;"></div>
<div class="a" style="left:1052px;top:305px;width:92px;height:2px;background:#217346;"></div>
<div class="a" style="left:1px;top:334px;width:40px;height:1px;background:#c0c0c0;"></div>
<div class="a" style="left:41px;top:334px;width:1372px;height:1px;background:#d4d4d4;"></div>
<div class="t" style="left:15.50px;top:314.10px;font-size:17.6px;color:#111;">1</div>
<div class="a" style="left:1px;top:362px;width:40px;height:1px;background:#c0c0c0;"></div>
<div class="a" style="left:41px;top:362px;width:1372px;height:1px;background:#d4d4d4;"></div>
<div class="t" style="left:15.50px;top:342.10px;font-size:17.6px;color:#111;">2</div>
<div class="a" style="left:1px;top:390px;width:40px;height:1px;background:#c0c0c0;"></div>
<div class="a" style="left:41px;top:390px;width:1372px;height:1px;background:#d4d4d4;"></div>
<div class="t" style="left:15.50px;top:370.10px;font-size:17.6px;color:#111;">3</div>
<div class="a" style="left:1px;top:418px;width:40px;height:1px;background:#c0c0c0;"></div>
<div class="a" style="left:41px;top:418px;width:1372px;height:1px;background:#d4d4d4;"></div>
<div class="t" style="left:15.50px;top:398.10px;font-size:17.6px;color:#111;">4</div>
<div class="a" style="left:1px;top:446px;width:40px;height:1px;background:#c0c0c0;"></div>
<div class="a" style="left:41px;top:446px;width:1372px;height:1px;background:#d4d4d4;"></div>
<div class="t" style="left:15.50px;top:426.10px;font-size:17.6px;color:#111;">5</div>
<div class="a" style="left:1px;top:474px;width:40px;height:1px;background:#c0c0c0;"></div>
<div class="a" style="left:41px;top:474px;width:1372px;height:1px;background:#d4d4d4;"></div>
<div class="t" style="left:15.50px;top:454.10px;font-size:17.6px;color:#111;">6</div>
<div class="a" style="left:1px;top:502px;width:40px;height:1px;background:#c0c0c0;"></div>
<div class="a" style="left:41px;top:502px;width:1372px;height:1px;background:#d4d4d4;"></div>
<div class="t" style="left:15.50px;top:482.10px;font-size:17.6px;color:#111;">7</div>
<div class="a" style="left:1px;top:530px;width:40px;height:1px;background:#c0c0c0;"></div>
<div class="a" style="left:41px;top:530px;width:1372px;height:1px;background:#d4d4d4;"></div>
<div class="t" style="left:15.50px;top:510.10px;font-size:17.6px;color:#111;">8</div>
<div class="a" style="left:1px;top:558px;width:40px;height:1px;background:#c0c0c0;"></div>
<div class="a" style="left:41px;top:558px;width:1372px;height:1px;background:#d4d4d4;"></div>
<div class="t" style="left:15.50px;top:538.10px;font-size:17.6px;color:#111;">9</div>
<div class="a" style="left:1px;top:586px;width:40px;height:1px;background:#c0c0c0;"></div>
<div class="a" style="left:41px;top:586px;width:1372px;height:1px;background:#d4d4d4;"></div>
<div class="t" style="left:10.50px;top:566.10px;font-size:17.6px;color:#111;">10</div>
<div class="a" style="left:1px;top:614px;width:40px;height:1px;background:#c0c0c0;"></div>
<div class="a" style="left:41px;top:614px;width:1372px;height:1px;background:#d4d4d4;"></div>
<div class="t" style="left:11.50px;top:594.10px;font-size:17.6px;color:#111;">11</div>
<div class="a" style="left:1px;top:642px;width:40px;height:1px;background:#c0c0c0;"></div>
<div class="a" style="left:41px;top:642px;width:1372px;height:1px;background:#d4d4d4;"></div>
<div class="t" style="left:10.50px;top:622.10px;font-size:17.6px;color:#111;">12</div>
<div class="a" style="left:1px;top:670px;width:40px;height:1px;background:#c0c0c0;"></div>
<div class="a" style="left:41px;top:670px;width:1372px;height:1px;background:#d4d4d4;"></div>
<div class="t" style="left:10.50px;top:650.10px;font-size:17.6px;color:#111;">13</div>
<div class="t" style="left:10.50px;top:678.10px;font-size:17.6px;color:#111;">14</div>
<div class="a" style="left:40px;top:307px;width:1px;height:370px;background:#a8a8a8;"></div>
<div class="a" style="left:132px;top:307px;width:1px;height:28px;background:#d4d4d4;"></div>
<div class="a" style="left:132px;top:447px;width:1px;height:230px;background:#d4d4d4;"></div>
<div class="a" style="left:224px;top:307px;width:1px;height:370px;background:#d4d4d4;"></div>
<div class="a" style="left:316px;top:307px;width:1px;height:370px;background:#d4d4d4;"></div>
<div class="a" style="left:408px;top:307px;width:1px;height:370px;background:#d4d4d4;"></div>
<div class="a" style="left:500px;top:307px;width:1px;height:370px;background:#d4d4d4;"></div>
<div class="a" style="left:592px;top:307px;width:1px;height:370px;background:#d4d4d4;"></div>
<div class="a" style="left:684px;top:307px;width:1px;height:370px;background:#d4d4d4;"></div>
<div class="a" style="left:776px;top:307px;width:1px;height:370px;background:#d4d4d4;"></div>
<div class="a" style="left:868px;top:307px;width:1px;height:370px;background:#d4d4d4;"></div>
<div class="a" style="left:960px;top:307px;width:1px;height:370px;background:#d4d4d4;"></div>
<div class="a" style="left:1052px;top:307px;width:1px;height:370px;background:#d4d4d4;"></div>
<div class="a" style="left:1144px;top:307px;width:1px;height:370px;background:#d4d4d4;"></div>
<div class="a" style="left:1236px;top:307px;width:1px;height:370px;background:#d4d4d4;"></div>
<div class="a" style="left:1328px;top:307px;width:1px;height:370px;background:#d4d4d4;"></div>
<div class="a" style="left:1413px;top:306px;width:1px;height:371px;background:#a8a8a8;"></div>
<div class="t" style="left:136.00px;top:311.91px;font-size:19px;color:#000;">total</div>
<div class="t" style="left:228.00px;top:311.91px;font-size:19px;color:#000;">P1</div>
<div class="t" style="left:320.00px;top:311.91px;font-size:19px;color:#000;">P2</div>
<div class="t" style="left:412.00px;top:311.91px;font-size:19px;color:#000;">P3</div>
<div class="t" style="left:504.00px;top:311.91px;font-size:19px;color:#000;">P4</div>
<div class="t" style="left:596.00px;top:311.91px;font-size:19px;color:#000;">P5</div>
<div class="t" style="left:688.00px;top:311.91px;font-size:19px;color:#000;">P6</div>
<div class="t" style="left:780.00px;top:311.91px;font-size:19px;color:#000;">P7</div>
<div class="t" style="left:872.00px;top:311.91px;font-size:19px;color:#000;">P8</div>
<div class="t" style="left:964.00px;top:311.91px;font-size:19px;color:#000;">P9</div>
<div class="t" style="left:1056.00px;top:311.91px;font-size:19px;color:#000;">P10</div>
<div class="t" style="left:44.00px;top:339.91px;font-size:19px;color:#000;">correlación</div>
<div class="t" style="left:243.00px;top:339.91px;font-size:19px;color:#000;">0,30025</div>
<div class="t" style="left:346.00px;top:339.91px;font-size:19px;color:#000;">0,3845</div>
<div class="t" style="left:427.00px;top:339.91px;font-size:19px;color:#000;">0,15651</div>
<div class="t" style="left:519.00px;top:339.91px;font-size:19px;color:#000;">0,51741</div>
<div class="t" style="left:611.00px;top:339.91px;font-size:19px;color:#000;">0,18007</div>
<div class="t" style="left:703.00px;top:339.91px;font-size:19px;color:#000;">0,57175</div>
<div class="t" style="left:795.00px;top:339.91px;font-size:19px;color:#000;">0,33341</div>
<div class="t" style="left:887.00px;top:339.91px;font-size:19px;color:#000;">0,15651</div>
<div class="t" style="left:979.00px;top:339.91px;font-size:19px;color:#000;">0,78718</div>
<div class="t" style="left:1071.00px;top:339.91px;font-size:19px;color:#000;">0,19361</div>
<div class="t" style="left:44.00px;top:367.91px;font-size:19px;color:#000;">pertinencia</div>
<div class="t" style="left:301.00px;top:367.91px;font-size:19px;color:#000;">6</div>
<div class="t" style="left:393.00px;top:367.91px;font-size:19px;color:#000;">4</div>
<div class="t" style="left:485.00px;top:367.91px;font-size:19px;color:#000;">9</div>
<div class="t" style="left:577.00px;top:367.91px;font-size:19px;color:#000;">3</div>
<div class="t" style="left:669.00px;top:367.91px;font-size:19px;color:#000;">8</div>
<div class="t" style="left:761.00px;top:367.91px;font-size:19px;color:#000;">2</div>
<div class="t" style="left:853.00px;top:367.91px;font-size:19px;color:#000;">5</div>
<div class="t" style="left:945.00px;top:367.91px;font-size:19px;color:#000;">9</div>
<div class="t" style="left:1037.00px;top:367.91px;font-size:19px;color:#000;">1</div>
<div class="t" style="left:1129.00px;top:367.91px;font-size:19px;color:#000;">7</div>
<div class="t" style="left:44.00px;top:395.91px;font-size:19px;color:#000;">número de respuesta</div>
<div class="t" style="left:301.00px;top:395.91px;font-size:19px;color:#000;">2</div>
<div class="t" style="left:393.00px;top:395.91px;font-size:19px;color:#000;">2</div>
<div class="t" style="left:485.00px;top:395.91px;font-size:19px;color:#000;">2</div>
<div class="t" style="left:577.00px;top:395.91px;font-size:19px;color:#000;">3</div>
<div class="t" style="left:669.00px;top:395.91px;font-size:19px;color:#000;">2</div>
<div class="t" style="left:761.00px;top:395.91px;font-size:19px;color:#000;">3</div>
<div class="t" style="left:853.00px;top:395.91px;font-size:19px;color:#000;">2</div>
<div class="t" style="left:945.00px;top:395.91px;font-size:19px;color:#000;">2</div>
<div class="t" style="left:1037.00px;top:395.91px;font-size:19px;color:#000;">3</div>
<div class="t" style="left:1129.00px;top:395.91px;font-size:19px;color:#000;">4</div>
<div class="t" style="left:44.00px;top:423.91px;font-size:19px;color:#000;">respuesta correcta</div>
<div class="t" style="left:301.00px;top:423.91px;font-size:19px;color:#000;">1</div>
<div class="t" style="left:393.00px;top:423.91px;font-size:19px;color:#000;">2</div>
<div class="t" style="left:485.00px;top:423.91px;font-size:19px;color:#000;">1</div>
<div class="t" style="left:577.00px;top:423.91px;font-size:19px;color:#000;">2</div>
<div class="t" style="left:669.00px;top:423.91px;font-size:19px;color:#000;">1</div>
<div class="t" style="left:761.00px;top:423.91px;font-size:19px;color:#000;">2</div>
<div class="t" style="left:853.00px;top:423.91px;font-size:19px;color:#000;">1</div>
<div class="t" style="left:945.00px;top:423.91px;font-size:19px;color:#000;">2</div>
<div class="t" style="left:1037.00px;top:423.91px;font-size:19px;color:#000;">1</div>
<div class="t" style="left:1129.00px;top:423.91px;font-size:19px;color:#000;">3</div>
<div class="t" style="left:44.00px;top:479.91px;font-size:19px;color:#000;">a</div>
<div class="t" style="left:194.00px;top:479.91px;font-size:19px;color:#000;">8,5</div>
<div class="t" style="left:301.00px;top:479.91px;font-size:19px;color:#000;">1</div>
<div class="t" style="left:393.00px;top:479.91px;font-size:19px;color:#000;">1</div>
<div class="t" style="left:485.00px;top:479.91px;font-size:19px;color:#000;">1</div>
<div class="t" style="left:577.00px;top:479.91px;font-size:19px;color:#000;">2</div>
<div class="t" style="left:669.00px;top:479.91px;font-size:19px;color:#000;">1</div>
<div class="t" style="left:761.00px;top:479.91px;font-size:19px;color:#000;">2</div>
<div class="t" style="left:853.00px;top:479.91px;font-size:19px;color:#000;">1</div>
<div class="t" style="left:945.00px;top:479.91px;font-size:19px;color:#000;">2</div>
<div class="t" style="left:1037.00px;top:479.91px;font-size:19px;color:#000;">1</div>
<div class="t" style="left:1129.00px;top:479.91px;font-size:19px;color:#000;">3</div>
<div class="t" style="left:44.00px;top:507.91px;font-size:19px;color:#000;">b</div>
<div class="t" style="left:183.00px;top:507.91px;font-size:19px;color:#000;">9,75</div>
<div class="t" style="left:301.00px;top:507.91px;font-size:19px;color:#000;">1</div>
<div class="t" style="left:393.00px;top:507.91px;font-size:19px;color:#000;">2</div>
<div class="t" style="left:485.00px;top:507.91px;font-size:19px;color:#000;">1</div>
<div class="t" style="left:577.00px;top:507.91px;font-size:19px;color:#000;">2</div>
<div class="t" style="left:669.00px;top:507.91px;font-size:19px;color:#000;">1</div>
<div class="t" style="left:761.00px;top:507.91px;font-size:19px;color:#000;">2</div>
<div class="t" style="left:853.00px;top:507.91px;font-size:19px;color:#000;">1</div>
<div class="t" style="left:945.00px;top:507.91px;font-size:19px;color:#000;">2</div>
<div class="t" style="left:1037.00px;top:507.91px;font-size:19px;color:#000;">1</div>
<div class="t" style="left:1129.00px;top:507.91px;font-size:19px;color:#000;">2</div>
<div class="t" style="left:44.00px;top:535.91px;font-size:19px;color:#000;">c</div>
<div class="t" style="left:199.00px;top:535.91px;font-size:19px;color:#000;">10</div>
<div class="t" style="left:301.00px;top:535.91px;font-size:19px;color:#000;">1</div>
<div class="t" style="left:393.00px;top:535.91px;font-size:19px;color:#000;">2</div>
<div class="t" style="left:485.00px;top:535.91px;font-size:19px;color:#000;">1</div>
<div class="t" style="left:577.00px;top:535.91px;font-size:19px;color:#000;">2</div>
<div class="t" style="left:669.00px;top:535.91px;font-size:19px;color:#000;">1</div>
<div class="t" style="left:761.00px;top:535.91px;font-size:19px;color:#000;">2</div>
<div class="t" style="left:853.00px;top:535.91px;font-size:19px;color:#000;">1</div>
<div class="t" style="left:945.00px;top:535.91px;font-size:19px;color:#000;">2</div>
<div class="t" style="left:1037.00px;top:535.91px;font-size:19px;color:#000;">1</div>
<div class="t" style="left:1129.00px;top:535.91px;font-size:19px;color:#000;">3</div>
<div class="t" style="left:44.00px;top:563.91px;font-size:19px;color:#000;">d</div>
<div class="t" style="left:199.00px;top:563.91px;font-size:19px;color:#000;">10</div>
<div class="t" style="left:301.00px;top:563.91px;font-size:19px;color:#000;">1</div>
<div class="t" style="left:393.00px;top:563.91px;font-size:19px;color:#000;">2</div>
<div class="t" style="left:485.00px;top:563.91px;font-size:19px;color:#000;">1</div>
<div class="t" style="left:577.00px;top:563.91px;font-size:19px;color:#000;">2</div>
<div class="t" style="left:669.00px;top:563.91px;font-size:19px;color:#000;">1</div>
<div class="t" style="left:761.00px;top:563.91px;font-size:19px;color:#000;">2</div>
<div class="t" style="left:853.00px;top:563.91px;font-size:19px;color:#000;">1</div>
<div class="t" style="left:945.00px;top:563.91px;font-size:19px;color:#000;">2</div>
<div class="t" style="left:1037.00px;top:563.91px;font-size:19px;color:#000;">1</div>
<div class="t" style="left:1129.00px;top:563.91px;font-size:19px;color:#000;">3</div>
<div class="t" style="left:44.00px;top:591.91px;font-size:19px;color:#000;">e</div>
<div class="t" style="left:194.00px;top:591.91px;font-size:19px;color:#000;">8,5</div>
<div class="t" style="left:301.00px;top:591.91px;font-size:19px;color:#000;">1</div>
<div class="t" style="left:393.00px;top:591.91px;font-size:19px;color:#000;">2</div>
<div class="t" style="left:485.00px;top:591.91px;font-size:19px;color:#000;">1</div>
<div class="t" style="left:577.00px;top:591.91px;font-size:19px;color:#000;">2</div>
<div class="t" style="left:669.00px;top:591.91px;font-size:19px;color:#000;">2</div>
<div class="t" style="left:761.00px;top:591.91px;font-size:19px;color:#000;">2</div>
<div class="t" style="left:853.00px;top:591.91px;font-size:19px;color:#000;">1</div>
<div class="t" style="left:945.00px;top:591.91px;font-size:19px;color:#000;">2</div>
<div class="t" style="left:1037.00px;top:591.91px;font-size:19px;color:#000;">1</div>
<div class="t" style="left:1129.00px;top:591.91px;font-size:19px;color:#000;">3</div>
<div class="t" style="left:44.00px;top:619.91px;font-size:19px;color:#000;">f</div>
<div class="t" style="left:151.00px;top:619.91px;font-size:19px;color:#000;">5,91667</div>
<div class="t" style="left:301.00px;top:619.91px;font-size:19px;color:#000;">1</div>
<div class="t" style="left:393.00px;top:619.91px;font-size:19px;color:#000;">2</div>
<div class="t" style="left:485.00px;top:619.91px;font-size:19px;color:#000;">1</div>
<div class="t" style="left:577.00px;top:619.91px;font-size:19px;color:#000;">2</div>
<div class="t" style="left:669.00px;top:619.91px;font-size:19px;color:#000;">1</div>
<div class="t" style="left:761.00px;top:619.91px;font-size:19px;color:#000;">2</div>
<div class="t" style="left:853.00px;top:619.91px;font-size:19px;color:#000;">2</div>
<div class="t" style="left:945.00px;top:619.91px;font-size:19px;color:#000;">2</div>
<div class="t" style="left:1037.00px;top:619.91px;font-size:19px;color:#000;">2</div>
<div class="t" style="left:1129.00px;top:619.91px;font-size:19px;color:#000;">2</div>
<div class="t" style="left:44.00px;top:647.91px;font-size:19px;color:#000;">g</div>
<div class="t" style="left:199.00px;top:647.91px;font-size:19px;color:#000;">10</div>
<div class="t" style="left:301.00px;top:647.91px;font-size:19px;color:#000;">1</div>
<div class="t" style="left:393.00px;top:647.91px;font-size:19px;color:#000;">2</div>
<div class="t" style="left:485.00px;top:647.91px;font-size:19px;color:#000;">1</div>
<div class="t" style="left:577.00px;top:647.91px;font-size:19px;color:#000;">2</div>
<div class="t" style="left:669.00px;top:647.91px;font-size:19px;color:#000;">1</div>
<div class="t" style="left:761.00px;top:647.91px;font-size:19px;color:#000;">2</div>
<div class="t" style="left:853.00px;top:647.91px;font-size:19px;color:#000;">1</div>
<div class="t" style="left:945.00px;top:647.91px;font-size:19px;color:#000;">2</div>
<div class="t" style="left:1037.00px;top:647.91px;font-size:19px;color:#000;">1</div>
<div class="t" style="left:1129.00px;top:647.91px;font-size:19px;color:#000;">3</div>
<div class="t" style="left:44.00px;top:451.91px;font-size:19px;color:#000;font-weight:bold;">nombre</div>
<div class="a" style="left:1414px;top:279px;width:25px;height:398px;background:#e6e6e6;"></div>
<div class="a" style="left:1417px;top:281px;width:19px;height:19px;background:#fff;box-sizing:border-box;border:1px solid #d0d0d0;"></div>
<svg class="a" style="left:1421px;top:287px" width="11" height="6" viewBox="0 0 11 6"><path d="M0 6H11L5.5 0Z" fill="#777"/></svg>
<div class="a" style="left:1417px;top:300px;width:19px;height:233px;background:#fff;box-sizing:border-box;border:1px solid #ababab;"></div>
<div class="a" style="left:1417px;top:533px;width:19px;height:126px;background:#dadada;"></div>
<div class="a" style="left:1417px;top:659px;width:19px;height:19px;background:#fff;box-sizing:border-box;border:1px solid #d0d0d0;"></div>
<svg class="a" style="left:1421px;top:666px" width="11" height="6" viewBox="0 0 11 6"><path d="M0 0H11L5.5 6Z" fill="#777"/></svg>
<div class="a" style="left:1px;top:677px;width:1438px;height:29px;background:#e6e6e6;"></div>
<div class="a" style="left:1px;top:677px;width:1413px;height:1px;background:#ababab;"></div>
<svg class="a" style="left:28px;top:686px" width="8" height="11" viewBox="0 0 8 11"><path d="M6 0.5V10.5L1 5.5Z" fill="#c6c6c6"/></svg>
<svg class="a" style="left:56px;top:686px" width="8" height="11" viewBox="0 0 8 11"><path d="M2 0.5V10.5L7 5.5Z" fill="#c6c6c6"/></svg>
<div class="a" style="left:104px;top:677px;width:108px;height:26px;background:#fff;box-sizing:border-box;border-left:1px solid #ababab;border-right:1px solid #ababab;"></div>
<div class="a" style="left:104px;top:701px;width:108px;height:2px;background:#217346;"></div>
<div class="t" style="left:116.00px;top:681.45px;font-size:16px;color:#217346;font-weight:bold;letter-spacing:-0.222px;">respuestas</div>
<div class="t" style="left:224.00px;top:681.45px;font-size:16px;color:#444;letter-spacing:0.286px;">cálculos</div>
<div class="a" style="left:296px;top:682px;width:1px;height:19px;background:#ababab;"></div>
<svg class="a" style="left:330px;top:682px" width="21" height="21" viewBox="0 0 21 21"><circle cx="10.5" cy="10.5" r="9.5" stroke="#777" stroke-width="1.3" fill="none"/><path d="M10.5 5V16M5 10.5H16" stroke="#777" stroke-width="1.6"/></svg>
<div class="a" style="left:861px;top:685px;width:3px;height:3px;background:#a0a0a0;"></div>
<div class="a" style="left:861px;top:690px;width:3px;height:3px;background:#a0a0a0;"></div>
<div class="a" style="left:861px;top:695px;width:3px;height:3px;background:#a0a0a0;"></div>
<div class="a" style="left:879px;top:682px;width:535px;height:19px;background:#dadada;"></div>
<div class="a" style="left:879px;top:682px;width:19px;height:19px;background:#fff;box-sizing:border-box;border:1px solid #c0c0c0;"></div>
<svg class="a" style="left:884px;top:686px" width="8" height="11" viewBox="0 0 8 11"><path d="M6 0.5V10.5L1 5.5Z" fill="#777"/></svg>
<div class="a" style="left:897px;top:682px;width:462px;height:19px;background:#fff;box-sizing:border-box;border:1px solid #ababab;"></div>
<div class="a" style="left:1395px;top:682px;width:19px;height:19px;background:#fff;box-sizing:border-box;border:1px solid #c0c0c0;"></div>
<svg class="a" style="left:1400px;top:686px" width="8" height="11" viewBox="0 0 8 11"><path d="M2 0.5V10.5L7 5.5Z" fill="#777"/></svg>
<div class="a" style="left:1px;top:706px;width:1438px;height:40px;background:#f1f1f1;"></div>
<div class="a" style="left:1px;top:706px;width:1438px;height:1px;background:#c6c6c6;"></div>
<div class="t" style="left:14.00px;top:719.15px;font-size:14px;color:#555;letter-spacing:-0.600px;">Gereed</div>
<div class="a" style="left:1045px;top:707px;width:51px;height:39px;background:#c6c6c6;"></div>
<svg class="a" style="left:1061px;top:717px" width="19" height="19" viewBox="0 0 19 19"><path d="M0.5 0.5H18.5V18.5H0.5ZM0.5 6.5H18.5M0.5 12.5H18.5M6.5 0.5V18.5M12.5 0.5V18.5" stroke="#6a6a6a" stroke-width="1.1" fill="none"/></svg>
<svg class="a" style="left:1112px;top:717px" width="19" height="19" viewBox="0 0 19 19"><rect x="0.5" y="0.5" width="18" height="18" stroke="#6a6a6a" stroke-width="1.1" fill="none"/><rect x="4.5" y="3.5" width="10" height="12" stroke="#6a6a6a" fill="none"/><path d="M7 7.5H12M7 10H12M7 12.5H12" stroke="#6a6a6a"/></svg>
<svg class="a" style="left:1163px;top:717px" width="19" height="19" viewBox="0 0 19 19"><rect x="0.5" y="0.5" width="18" height="17" stroke="#6a6a6a" stroke-width="1.1" fill="none"/><path d="M0.5 10.5H12.5V0.5M6.5 0.5V10.5" stroke="#6a6a6a" stroke-width="1.1" fill="none"/></svg>
<div class="a" style="left:1203px;top:725px;width:11px;height:2px;background:#555;"></div>
<div class="a" style="left:1217px;top:726px;width:124px;height:1px;background:#a8a8a8;"></div>
<div class="a" style="left:1280px;top:719px;width:5px;height:14px;background:#666;"></div>
<div class="a" style="left:1346px;top:725px;width:13px;height:2px;background:#555;"></div>
<div class="a" style="left:1351.5px;top:720px;width:2px;height:12px;background:#555;"></div>
<div class="t" style="left:1380.00px;top:719.57px;font-size:13.5px;color:#555;letter-spacing:-0.600px;">115%</div>
</body></html>
